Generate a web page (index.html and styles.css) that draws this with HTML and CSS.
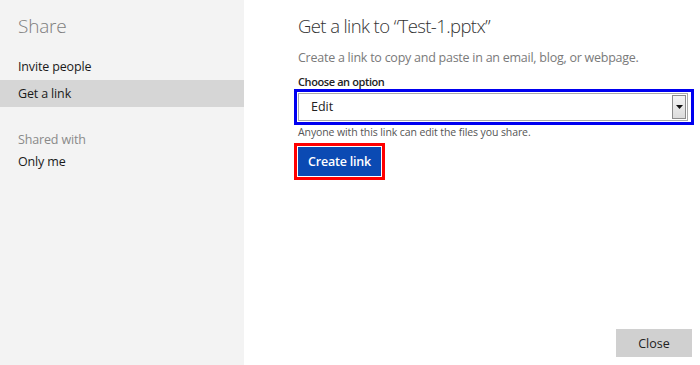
FILE: index.html
```html
<!DOCTYPE html>
<html lang="en">
<head>
  <meta charset="UTF-8">
  <title>Share</title>
  <link rel="stylesheet" href="styles.css">
</head>
<body>

<div class="dialog">
  <div class="sidebar">
    <h1>Share</h1>
    <ul class="nav">
      <li>Invite people</li>
      <li class="active">Get a link</li>
    </ul>
    <h2>Shared with</h2>
    <ul class="nav">
      <li>Only me</li>
    </ul>
  </div>

  <div class="main">
    <h1>Get a link to “Test-1.pptx”</h1>
    <p class="intro">Create a link to copy and paste in an email, blog, or webpage.</p>

    <label class="field-label">Choose an option</label>
    <div class="mark mark-blue">
      <div class="select">
        <span>Edit</span>
        <span class="arrow">
          <svg width="7" height="4" viewBox="0 0 7 4"><path d="M0 0h7L3.5 4z" fill="#111"/></svg>
        </span>
      </div>
    </div>
    <p class="hint">Anyone with this link can edit the files you share.</p>

    <div class="mark mark-red">
      <button class="primary">Create link</button>
    </div>

    <div class="footer">
      <button class="secondary">Close</button>
    </div>
  </div>
</div>

</body>
</html>
```

FILE: styles.css
```css
body {
  margin: 0;
  padding: 0;
  font-family: "Open Sans", "Noto Sans", sans-serif;
  color: #222;
  background: #fff;
}
.dialog {
  display: flex;
  height: 365px;
}
.sidebar {
  width: 244px;
  background: #f3f3f3;
  padding-top: 12px;
}
.sidebar h1 {
  margin: 0 0 13px 18px;
  font-size: 19px;
  font-weight: 300;
  line-height: 28px;
  letter-spacing: -0.2px;
  color: #7d7d7d;
}
.sidebar h2 {
  margin: 22px 0 0 18px;
  font-size: 12.5px;
  font-weight: 400;
  line-height: 22px;
  letter-spacing: -0.15px;
  color: #8a8a8a;
}
.nav {
  list-style: none;
  margin: 0;
  padding: 0;
}
.nav li {
  padding-left: 18px;
  font-size: 12.5px;
  line-height: 27px;
  letter-spacing: -0.15px;
  color: #1a1a1a;
}
.nav li.active {
  background: #d6d6d6;
}
.sidebar h2 + .nav li {
  line-height: 22px;
}
.main {
  flex: 1;
  display: flex;
  flex-direction: column;
  padding: 12px 8px 8px 54px;
}
.main h1 {
  margin: 0;
  font-size: 18.5px;
  font-weight: 300;
  line-height: 28px;
  letter-spacing: -0.6px;
  color: #333;
}
.intro {
  margin: 9px 0 0;
  font-size: 12.5px;
  line-height: 18px;
  letter-spacing: -0.25px;
  color: #7a7a7a;
}
.field-label {
  margin-top: 7px;
  font-size: 11px;
  font-weight: 600;
  line-height: 15px;
  letter-spacing: -0.4px;
  color: #222;
}
.mark {
  align-self: flex-start;
  margin-left: -4px;
  padding: 1px;
  border: 3px solid;
}
.mark-blue {
  align-self: stretch;
  margin-right: -2px;
  padding-right: 3px;
  border-color: #0000f0;
}
.mark-red {
  margin-top: 4px;
  border-color: #f00;
}
.select {
  display: flex;
  align-items: stretch;
  height: 26px;
  border: 1px solid #a9a9a9;
  background: #fff;
  font-size: 12.5px;
}
.select span:first-child {
  flex: 1;
  padding-left: 12px;
  line-height: 26px;
}
.arrow {
  width: 12px;
  margin: 1px;
  border: 1px solid #8c8c8c;
  background: linear-gradient(#f4f4f4, #dcdcdc);
  display: flex;
  align-items: center;
  justify-content: center;
}
.hint {
  margin: 0;
  font-size: 10.5px;
  line-height: 14px;
  letter-spacing: -0.1px;
  color: #555;
}
button {
  font-family: inherit;
  border: none;
  cursor: pointer;
}
.primary {
  display: block;
  height: 29px;
  padding: 0 10px;
  background: #0b4ab3;
  color: #fff;
  font-size: 12.5px;
  font-weight: 600;
  letter-spacing: -0.2px;
}
.footer {
  margin-top: auto;
  display: flex;
  justify-content: flex-end;
}
.secondary {
  width: 76px;
  height: 28px;
  background: #d0d0d0;
  color: #222;
  font-size: 12.5px;
}
```
